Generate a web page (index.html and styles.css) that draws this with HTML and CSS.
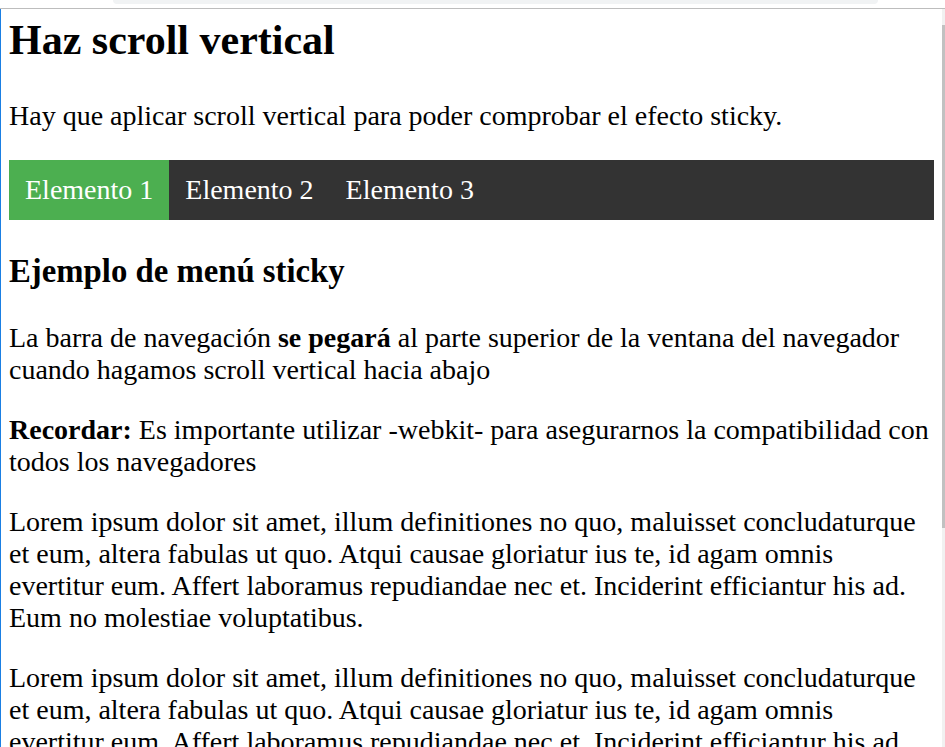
FILE: index.html
```html
<!DOCTYPE html>
<html lang="es">
<head>
<meta charset="utf-8">
<title>Menú sticky</title>
<link rel="stylesheet" href="styles.css">
</head>
<body>
<div class="chrome"><div class="pill"></div></div>
<div class="frame">
  <div class="page">
    <h1>Haz scroll vertical</h1>
    <p>Hay que aplicar scroll vertical para poder comprobar el efecto sticky.</p>
    <ul class="nav">
      <li><a class="active" href="#">Elemento 1</a></li>
      <li><a href="#">Elemento 2</a></li>
      <li><a href="#">Elemento 3</a></li>
    </ul>
    <h2>Ejemplo de menú sticky</h2>
    <p>La barra de navegación <b>se pegará</b> al parte superior de la ventana del navegador cuando hagamos scroll vertical hacia abajo</p>
    <p><b>Recordar:</b> Es importante utilizar -webkit- para asegurarnos la compatibilidad con todos los navegadores</p>
    <p>Lorem ipsum dolor sit amet, illum definitiones no quo, maluisset concludaturque et eum, altera fabulas ut quo. Atqui causae gloriatur ius te, id agam omnis evertitur eum. Affert laboramus repudiandae nec et. Inciderint efficiantur his ad. Eum no molestiae voluptatibus.</p>
    <p>Lorem ipsum dolor sit amet, illum definitiones no quo, maluisset concludaturque et eum, altera fabulas ut quo. Atqui causae gloriatur ius te, id agam omnis evertitur eum. Affert laboramus repudiandae nec et. Inciderint efficiantur his ad. Eum no molestiae voluptatibus.</p>
    <p>Lorem ipsum dolor sit amet, illum definitiones no quo, maluisset concludaturque et eum, altera fabulas ut quo. Atqui causae gloriatur ius te, id agam omnis evertitur eum. Affert laboramus repudiandae nec et. Inciderint efficiantur his ad. Eum no molestiae voluptatibus.</p>
  </div>
  <div class="scrollbar"><div class="sb-top"></div><div class="sb-thumb"></div></div>
</div>
</body>
</html>
```

FILE: styles.css
```css
html, body {
  margin: 0;
  padding: 0;
  height: 747px;
  overflow: hidden;
  background: #ffffff;
}

body {
  font-family: "Liberation Serif", "Times New Roman", serif;
  color: #000000;
}

.chrome {
  height: 8px;
  border-bottom: 1px solid #bdbdbd;
  background: #ffffff;
}

.pill {
  margin-left: 113px;
  width: 765px;
  height: 4px;
  background: #f1f3f4;
  border-radius: 0 0 7px 7px;
}

.frame {
  display: flex;
  height: 738px;
}

.page {
  flex: 1;
  border-left: 1px solid #1a7fe3;
  padding: 0 8px;
  font-size: 28px;
  line-height: 32px;
  overflow: hidden;
}

.scrollbar {
  width: 3px;
  background: #f1f1f1;
  display: flex;
  flex-direction: column;
}

.sb-top {
  height: 16px;
  background: #f1f1f1;
}

.sb-thumb {
  height: 503px;
  background: #c1c1c1;
}

h1 {
  font-size: 42px;
  line-height: 48px;
  font-weight: bold;
  margin: 7px 0 36px;
}

h2 {
  font-size: 32.76px;
  line-height: 38px;
  font-weight: bold;
  margin: 32px 0 32px;
}

p {
  margin: 28px 0;
}

.nav {
  list-style: none;
  margin: 0;
  padding: 0;
  display: flex;
  background: #333333;
}

.nav a {
  display: block;
  padding: 14px 16px;
  color: #ffffff;
  text-decoration: none;
}

.nav a.active {
  background: #4caf50;
}
```
